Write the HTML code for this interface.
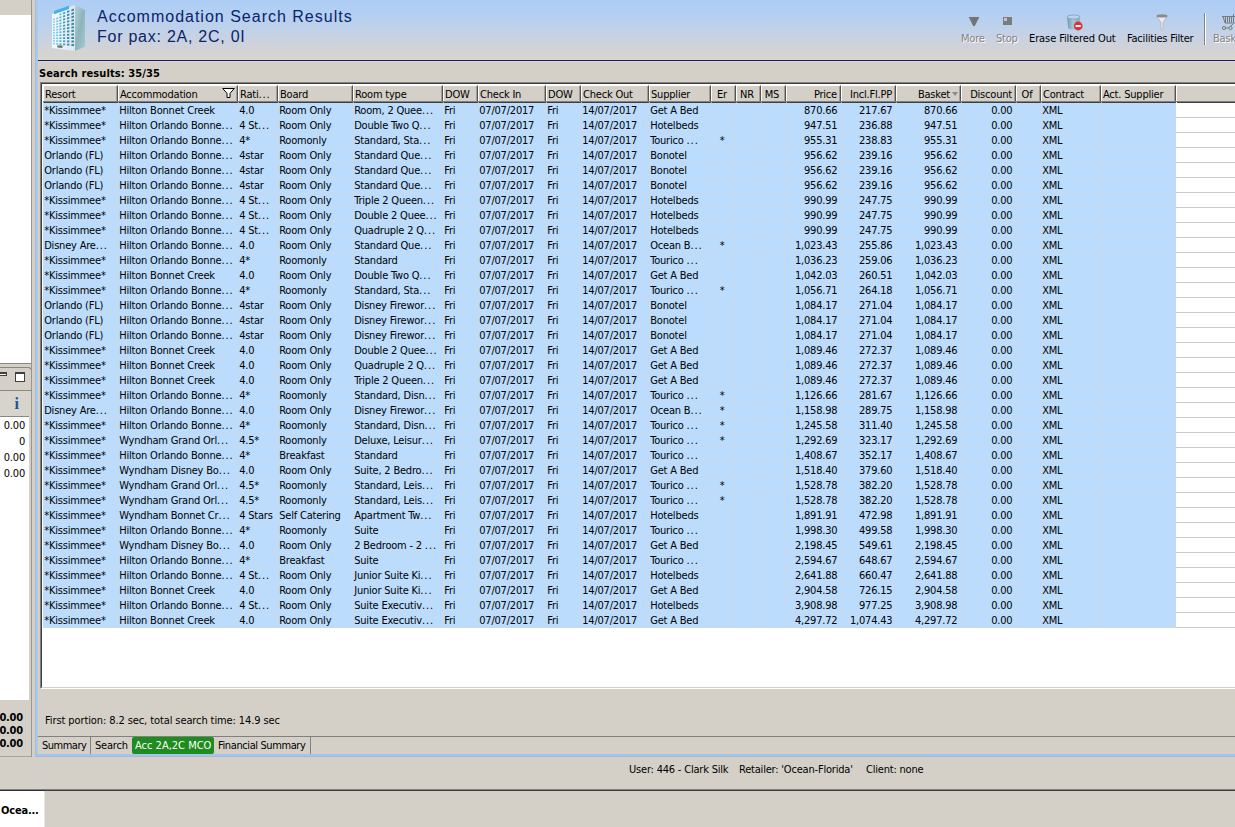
<!DOCTYPE html><html><head><meta charset="utf-8"><title>Accommodation Search Results</title><style>html,body{margin:0;padding:0}
body{width:1235px;height:827px;overflow:hidden;background:#d4d0c8;position:relative;font-family:"DejaVu Sans Condensed","Liberation Sans",sans-serif;font-size:11px;letter-spacing:-0.2px;color:#000;line-height:15px}
div,span{box-sizing:border-box}
.abs{position:absolute}
/* left panel */
#lp-top{left:0;top:0;width:31px;height:15px;background:#d4d0c8}
#lp-w1{left:0;top:15px;width:31px;height:349px;background:#fff;border-bottom:1px solid #8c8880}
#lp-mid{left:0;top:367px;width:32px;height:50px;background:#d4d0c8;border-top:1px solid #8c8880;border-right:1px solid #8c8880;border-top-right-radius:4px}
#lp-w2{left:0;top:416px;width:29px;height:284px;background:#fff;border-top:1px solid #8c8880}
#lp-bot{left:0;top:700px;width:31px;height:56px;background:#d4d0c8}
.lnum{position:absolute;right:1210px;width:40px;text-align:right;white-space:nowrap}
.lnumb{position:absolute;right:1212px;width:40px;text-align:right;white-space:nowrap;font-weight:bold}
#gut{left:31px;top:0;width:4px;height:757px;background:#d4d0c8;border-left:1px solid #9a968e}
#bluev{left:35px;top:0;width:3px;height:757px;background:linear-gradient(to right,#aebccc 1px,#a6caf0 1px)}
#blueh{left:35px;top:754px;width:1200px;height:3px;background:linear-gradient(to bottom,#a0c6f0 2px,#a9b9cc 2px)}
/* header */
#hdr{left:38px;top:0;width:1197px;height:60px;background:linear-gradient(to bottom,#aecdf6 0px,#b3cff2 14px,#c2d2e8 32px,#cfd2da 46px,#d6d4ce 56px,#dad8d0 60px)}
#hline{left:38px;top:60px;width:1197px;height:1px;background:#1c1c50}
#hline2{left:38px;top:61px;width:1197px;height:1px;background:#d6d4e6}
#title{left:97px;top:7px;font-family:"Liberation Sans",sans-serif;font-size:16px;line-height:20px;color:#0a246a;white-space:nowrap;letter-spacing:1px}
#title span{letter-spacing:0.75px}
.tb{position:absolute;top:31px;white-space:nowrap;line-height:15px}
.tb.dis{color:#848284;text-shadow:1px 1px 0 #fff}
#tsep{left:1204px;top:13px;width:2px;height:32px;border-left:1px solid #848284;border-right:1px solid #fff}
#sr{left:39px;top:66px;font-weight:bold;white-space:nowrap;line-height:15px;font-size:11px;letter-spacing:0.1px}
/* table */
#tbl{left:40px;top:82px;width:1200px;height:607px;background:#fff;border-left:1px solid #808080;border-top:1px solid #808080;border-bottom:1px solid #fff}
#tbl2{left:41px;top:83px;width:1200px;height:605px;border-left:1px solid #404040;border-top:1px solid #404040;border-bottom:1px solid #d4d0c8}
.thead{position:absolute;left:43px;top:85px;width:1192px;height:18px;background:#d4d0c8;border-top:1px solid #fff;border-bottom:1px solid #404040}
.thead:after{content:"";position:absolute;left:0;right:0;bottom:0;height:1px;background:#808080}
.th{position:absolute;top:-1px;height:18px;line-height:17px;padding:0 4px 0 1px;white-space:nowrap;overflow:hidden;border-left:1px solid #fff;border-right:1px solid #545454;border-top:1px solid #fff;border-bottom:1px solid #404040;background:#d4d0c8}
.th:after{content:"";position:absolute;right:0;top:0;bottom:0;width:1px;background:#a29e96}
.th:before{content:"";position:absolute;left:0;right:0;bottom:0;height:1px;background:#808080}
.th.r{text-align:right;padding-right:3px}.th.c{text-align:center;padding:0 3px 0 0}
.th.bask{padding-right:10px}
.funnel{position:absolute;right:2px;top:2px}
.th b,.td b,#otab b{font-weight:inherit;letter-spacing:0.9px}
#otab b{letter-spacing:-0.2px}
.sortarr{position:absolute;right:2px;top:6px;width:0;height:0;border-left:3.5px solid transparent;border-right:3.5px solid transparent;border-top:4px solid #8a8a8a}
.thfill{position:absolute;top:-1px;right:0;height:18px;border-top:1px solid #fff;border-left:1px solid #fff}
.tbody{position:absolute;left:43px;top:103px;width:1192px;height:525px}
.tr{position:absolute;left:0;width:1193px;height:15px;border-bottom:1px solid #cacaca;background:linear-gradient(to right,#bbdcfc 0,#bbdcfc 1133px,#fff 1133px)}
.tr:after{content:"";position:absolute;left:0;bottom:-1px;width:1133px;height:1px;background:#c6d9ee}
.td{position:absolute;top:0;height:15px;line-height:15px;padding:0 3px 0 1.2px;white-space:nowrap;overflow:hidden}
.td.r{text-align:right;padding-right:3.6px}.td.c{text-align:center;padding:0 3px 0 0}
.vl{position:absolute;top:0;width:1px;height:525px;background:#c6d9ee}
/* bottom */
#fp{left:45px;top:713px;white-space:nowrap;letter-spacing:-0.1px}
#tabline{left:38px;top:736px;width:1197px;height:1px;background:#808080}
.tab{position:absolute;top:737px;height:17px;line-height:18px;white-space:nowrap;padding:0 4px;border-right:1px solid #808080}
.tab.sel{background:#1e8c1e;color:#fff;border-radius:2px;border-right:none}
.st{position:absolute;top:762px;white-space:nowrap}
#botline{left:0;top:789px;width:1235px;height:2px;background:#404040;border-top:1px solid #808080}
#otab{left:0;top:791px;width:45px;height:36px;background:#fff;border-right:1px solid #e8e6e0;font-weight:bold;line-height:40px;padding-left:1px;white-space:nowrap;overflow:hidden;font-size:11px}
</style></head><body>
<div class="abs" id="lp-top"></div>
<div class="abs" id="lp-w1"></div>
<div class="abs" id="lp-mid">
 <div class="abs" style="left:-2px;top:4px;width:9px;height:4px;border:1px solid #404040;border-top-width:2px;background:#fff"></div>
 <div class="abs" style="left:15px;top:4px;width:10px;height:10px;border:1px solid #404040;border-top-width:2px;background:#fff"></div>
 <div class="abs" style="left:0;top:22px;width:31px;height:27px;background:#d7d4cd;border-top:1px solid #8c8880"></div>
 <div class="abs" style="left:14.5px;top:26px;font-family:'Liberation Serif',serif;font-weight:bold;font-size:16px;line-height:20px;color:#1e5596">i</div>
</div>
<div class="abs" id="lp-w2"></div>
<span class="lnum" style="top:418px">0.00</span>
<span class="lnum" style="top:434px">0</span>
<span class="lnum" style="top:450px">0.00</span>
<span class="lnum" style="top:466px">0.00</span>
<div class="abs" id="lp-bot"></div>
<span class="lnumb" style="top:710px">0.00</span>
<span class="lnumb" style="top:723px">0.00</span>
<span class="lnumb" style="top:736px">0.00</span>
<div class="abs" id="gut"></div>
<div class="abs" id="bluev"></div>
<div class="abs" id="hdr"></div>
<div class="abs" id="hline"></div><div class="abs" id="hline2"></div>
<svg class="abs" style="left:48px;top:2px" width="42" height="54" viewBox="0 0 42 54"><defs><linearGradient id="gs" x1="0" x2="1" y1="0" y2="1"><stop offset="0" stop-color="#b4d0d6"/><stop offset="0.5" stop-color="#8db4bc"/><stop offset="1" stop-color="#a4ccd4"/></linearGradient><linearGradient id="gf" x1="0" x2="1"><stop offset="0" stop-color="#f4f8fb"/><stop offset="1" stop-color="#dde8ee"/></linearGradient></defs><polygon points="27.0,3.0 37.0,8.0 37.0,44.5 27.0,49.0" fill="url(#gs)"/><polygon points="4.0,12.0 27.0,3.0 27.0,49.0 4.0,46.0" fill="url(#gf)"/><polygon points="6.0,9.0 21.0,3.8 21.0,7.0 6.0,12.2" fill="#43b2ea"/><polygon points="5.0,16.9 6.9,16.3 6.9,17.8 5.0,18.4" fill="#74d0f6"/><polygon points="5.0,19.6 6.9,19.1 6.9,20.6 5.0,21.1" fill="#74d0f6"/><polygon points="5.0,22.2 6.9,21.8 6.9,23.3 5.0,23.8" fill="#74d0f6"/><polygon points="5.0,24.9 6.9,24.5 6.9,26.0 5.0,26.4" fill="#74d0f6"/><polygon points="5.0,27.5 6.9,27.3 6.9,28.8 5.0,29.0" fill="#74d0f6"/><polygon points="5.0,30.2 6.9,30.0 6.9,31.5 5.0,31.7" fill="#74d0f6"/><polygon points="5.0,32.8 6.9,32.7 6.9,34.2 5.0,34.3" fill="#74d0f6"/><polygon points="5.0,35.5 6.9,35.4 6.9,36.9 5.0,37.0" fill="#74d0f6"/><polygon points="5.0,38.1 6.9,38.2 6.9,39.7 5.0,39.6" fill="#74d0f6"/><polygon points="5.0,40.8 6.9,40.9 6.9,42.4 5.0,42.3" fill="#74d0f6"/><polygon points="8.2,15.9 10.1,15.3 10.1,16.8 8.2,17.5" fill="#66c6f0"/><polygon points="8.2,18.7 10.1,18.1 10.1,19.7 8.2,20.3" fill="#66c6f0"/><polygon points="8.2,21.5 10.1,21.0 10.1,22.6 8.2,23.1" fill="#66c6f0"/><polygon points="8.2,24.3 10.1,23.9 10.1,25.5 8.2,25.8" fill="#66c6f0"/><polygon points="8.2,27.0 10.1,26.7 10.1,28.3 8.2,28.6" fill="#66c6f0"/><polygon points="8.2,29.8 10.1,29.6 10.1,31.2 8.2,31.4" fill="#66c6f0"/><polygon points="8.2,32.6 10.1,32.5 10.1,34.1 8.2,34.2" fill="#66c6f0"/><polygon points="8.2,35.4 10.1,35.4 10.1,36.9 8.2,37.0" fill="#66c6f0"/><polygon points="8.2,38.2 10.1,38.2 10.1,39.8 8.2,39.8" fill="#66c6f0"/><polygon points="8.2,41.0 10.1,41.1 10.1,42.7 8.2,42.6" fill="#66c6f0"/><polygon points="11.4,11.9 13.4,11.2 13.4,12.8 11.4,13.6" fill="#54b4e0"/><polygon points="11.4,14.8 13.4,14.2 13.4,15.8 11.4,16.5" fill="#54b4e0"/><polygon points="11.4,17.8 13.4,17.2 13.4,18.9 11.4,19.4" fill="#54b4e0"/><polygon points="11.4,20.7 13.4,20.2 13.4,21.9 11.4,22.4" fill="#54b4e0"/><polygon points="11.4,23.6 13.4,23.2 13.4,24.9 11.4,25.3" fill="#54b4e0"/><polygon points="11.4,26.5 13.4,26.2 13.4,27.9 11.4,28.2" fill="#54b4e0"/><polygon points="11.4,29.5 13.4,29.2 13.4,30.9 11.4,31.1" fill="#54b4e0"/><polygon points="11.4,32.4 13.4,32.3 13.4,33.9 11.4,34.1" fill="#54b4e0"/><polygon points="11.4,35.3 13.4,35.3 13.4,36.9 11.4,37.0" fill="#54b4e0"/><polygon points="11.4,38.3 13.4,38.3 13.4,40.0 11.4,39.9" fill="#54b4e0"/><polygon points="11.4,41.2 13.4,41.3 13.4,43.0 11.4,42.9" fill="#54b4e0"/><polygon points="15.0,10.6 17.2,9.7 17.2,11.5 15.0,12.3" fill="#46a0c8"/><polygon points="15.0,13.6 17.2,12.9 17.2,14.7 15.0,15.4" fill="#46a0c8"/><polygon points="15.0,16.7 17.2,16.1 17.2,17.9 15.0,18.5" fill="#46a0c8"/><polygon points="15.0,19.8 17.2,19.3 17.2,21.0 15.0,21.6" fill="#46a0c8"/><polygon points="15.0,22.9 17.2,22.4 17.2,24.2 15.0,24.7" fill="#46a0c8"/><polygon points="15.0,26.0 17.2,25.6 17.2,27.4 15.0,27.7" fill="#46a0c8"/><polygon points="15.0,29.1 17.2,28.8 17.2,30.6 15.0,30.8" fill="#46a0c8"/><polygon points="15.0,32.1 17.2,32.0 17.2,33.8 15.0,33.9" fill="#46a0c8"/><polygon points="15.0,35.2 17.2,35.2 17.2,36.9 15.0,37.0" fill="#46a0c8"/><polygon points="15.0,38.3 17.2,38.3 17.2,40.1 15.0,40.1" fill="#46a0c8"/><polygon points="15.0,41.4 17.2,41.5 17.2,43.3 15.0,43.2" fill="#46a0c8"/><polygon points="19.0,9.1 21.4,8.2 21.4,10.0 19.0,10.9" fill="#3c90b4"/><polygon points="19.0,12.3 21.4,11.5 21.4,13.4 19.0,14.2" fill="#3c90b4"/><polygon points="19.0,15.6 21.4,14.9 21.4,16.8 19.0,17.4" fill="#3c90b4"/><polygon points="19.0,18.8 21.4,18.2 21.4,20.1 19.0,20.7" fill="#3c90b4"/><polygon points="19.0,22.1 21.4,21.6 21.4,23.5 19.0,24.0" fill="#3c90b4"/><polygon points="19.0,25.3 21.4,25.0 21.4,26.8 19.0,27.2" fill="#3c90b4"/><polygon points="19.0,28.6 21.4,28.3 21.4,30.2 19.0,30.5" fill="#3c90b4"/><polygon points="19.0,31.9 21.4,31.7 21.4,33.6 19.0,33.7" fill="#3c90b4"/><polygon points="19.0,35.1 21.4,35.1 21.4,36.9 19.0,37.0" fill="#3c90b4"/><polygon points="19.0,38.4 21.4,38.4 21.4,40.3 19.0,40.3" fill="#3c90b4"/><polygon points="19.0,41.6 21.4,41.8 21.4,43.7 19.0,43.5" fill="#3c90b4"/><polygon points="23.4,7.4 26.0,6.4 26.0,8.4 23.4,9.4" fill="#3888a8"/><polygon points="23.4,10.9 26.0,10.0 26.0,12.0 23.4,12.9" fill="#3888a8"/><polygon points="23.4,14.3 26.0,13.6 26.0,15.6 23.4,16.3" fill="#3888a8"/><polygon points="23.4,17.8 26.0,17.1 26.0,19.1 23.4,19.8" fill="#3888a8"/><polygon points="23.4,21.2 26.0,20.7 26.0,22.7 23.4,23.2" fill="#3888a8"/><polygon points="23.4,24.6 26.0,24.2 26.0,26.2 23.4,26.6" fill="#3888a8"/><polygon points="23.4,28.1 26.0,27.8 26.0,29.8 23.4,30.1" fill="#3888a8"/><polygon points="23.4,31.5 26.0,31.4 26.0,33.4 23.4,33.5" fill="#3888a8"/><polygon points="23.4,35.0 26.0,34.9 26.0,36.9 23.4,37.0" fill="#3888a8"/><polygon points="23.4,38.5 26.0,38.5 26.0,40.5 23.4,40.5" fill="#3888a8"/><polygon points="23.4,41.9 26.0,42.1 26.0,44.1 23.4,43.9" fill="#3888a8"/><polygon points="9.4,43.2 14.5,43.6 14.5,46.0 9.4,45.6" fill="#6a7478"/></svg>
<div class="abs" id="title">Accommodation Search Results<br><span>For pax: 2A, 2C, 0I</span></div>
<svg class="abs" style="left:968px;top:17px" width="12" height="10" viewBox="0 0 12 10"><polygon points="0.7,0 11.3,0 6.8,9 5.2,9" fill="#747474"/></svg>
<svg class="abs" style="left:1003px;top:17px" width="9" height="8" viewBox="0 0 9 8"><rect x="0" y="0" width="9" height="8" fill="#7c7c7c"/><rect x="1" y="1" width="3" height="3" fill="#c4c4c4"/></svg>
<svg class="abs" style="left:1066px;top:14px" width="18" height="17" viewBox="0 0 18 17">
 <defs><linearGradient id="gb" x1="0" x2="1"><stop offset="0" stop-color="#6f9ab8"/><stop offset="0.5" stop-color="#a9c8da"/><stop offset="1" stop-color="#7fa6c0"/></linearGradient></defs>
 <path d="M1 3 L2.2 14.5 Q7.5 16.8 12.8 14.5 L14 3 Z" fill="url(#gb)"/>
 <ellipse cx="7.5" cy="3" rx="6.5" ry="2" fill="#b9d4e4" stroke="#7aa2be" stroke-width="0.8"/>
 <circle cx="12.2" cy="12" r="4.4" fill="#e23034"/><rect x="9.6" y="11" width="5.2" height="2" fill="#fff"/>
</svg>
<svg class="abs" style="left:1156px;top:14px" width="12" height="17" viewBox="0 0 12 17"><path d="M0.5 1.8 L5 8.5 V15.8 L7 14.8 V8.5 L11.5 1.8 Z" fill="#ececec" stroke="#b4b4b4" stroke-width="0.8"/><ellipse cx="6" cy="1.9" rx="5.5" ry="1.7" fill="#8c8c8c"/></svg>
<svg class="abs" style="left:1221px;top:13px" width="16" height="18" viewBox="0 0 16 18"><path d="M1 3.5 H14 M2 3.5 L4 10 H14 M4.5 3.5 V9.5 M6.5 3.5 V9.5 M8.5 3.5 V9.5 M10.5 3.5 V9.5 M12.5 1 V9.5" fill="none" stroke="#787878" stroke-width="1"/><circle cx="3" cy="15" r="1.6" fill="none" stroke="#787878"/><circle cx="9.5" cy="15" r="1.6" fill="none" stroke="#787878"/><path d="M4.6 15 H7.9 M9.5 13.4 L12 11" stroke="#787878" fill="none"/></svg>
<span class="tb dis" style="left:961px">More</span>
<span class="tb dis" style="left:996px">Stop</span>
<span class="tb" style="left:1029px;letter-spacing:-0.1px">Erase Filtered Out</span>
<span class="tb" style="left:1127px">Facilities Filter</span>
<div class="abs" id="tsep"></div>
<span class="tb dis" style="left:1213px">Basket</span>
<div class="abs" id="sr">Search results: 35/35</div>
<div class="abs" id="tbl"></div><div class="abs" id="tbl2"></div>

<div class="thead">
<div class="th l" style="left:0px;width:75px"><span>Resort</span></div>
<div class="th l" style="left:75px;width:120px"><span>Accommodation</span><svg class="funnel" width="13" height="10" viewBox="0 0 13 10"><path d="M0.7 0.5 H12.3 L8 5.3 V9.5 H5 V5.3 Z" fill="#fff" stroke="#000" stroke-width="1"/></svg></div>
<div class="th l" style="left:195px;width:40px"><span>Rati<b>...</b></span></div>
<div class="th l" style="left:235px;width:75px"><span>Board</span></div>
<div class="th l" style="left:310px;width:90px"><span>Room type</span></div>
<div class="th l" style="left:400px;width:35px"><span>DOW</span></div>
<div class="th l" style="left:435px;width:68px"><span>Check In</span></div>
<div class="th l" style="left:503px;width:35px"><span>DOW</span></div>
<div class="th l" style="left:538px;width:68px"><span>Check Out</span></div>
<div class="th l" style="left:606px;width:62px"><span>Supplier</span></div>
<div class="th c" style="left:668px;width:25px"><span>Er</span></div>
<div class="th c" style="left:693px;width:25px"><span>NR</span></div>
<div class="th c" style="left:718px;width:25px"><span>MS</span></div>
<div class="th r" style="left:743px;width:55px"><span>Price</span></div>
<div class="th r" style="left:798px;width:55px"><span>Incl.Fl.PP</span></div>
<div class="th r bask" style="left:853px;width:65px"><span>Basket</span><span class="sortarr"></span></div>
<div class="th r" style="left:918px;width:55px"><span>Discount</span></div>
<div class="th c" style="left:973px;width:25px"><span>Of</span></div>
<div class="th l" style="left:998px;width:60px"><span>Contract</span></div>
<div class="th l" style="left:1058px;width:75px"><span>Act. Supplier</span></div>
<div class="thfill" style="left:1133px"></div>
</div>
<div class="tbody">
<div class="tr" style="top:0px"><span class="td l" style="left:0px;width:75px">*Kissimmee*</span><span class="td l" style="left:75px;width:120px">Hilton Bonnet Creek</span><span class="td l" style="left:195px;width:40px">4.0</span><span class="td l" style="left:235px;width:75px">Room Only</span><span class="td l" style="left:310px;width:90px">Room, 2 Quee<b>...</b></span><span class="td l" style="left:400px;width:35px">Fri</span><span class="td l" style="left:435px;width:68px">07/07/2017</span><span class="td l" style="left:503px;width:35px">Fri</span><span class="td l" style="left:538px;width:68px">14/07/2017</span><span class="td l" style="left:606px;width:62px">Get A Bed</span><span class="td r" style="left:743px;width:55px">870.66</span><span class="td r" style="left:798px;width:55px">217.67</span><span class="td r" style="left:853px;width:65px">870.66</span><span class="td r" style="left:918px;width:55px">0.00</span><span class="td l" style="left:998px;width:60px">XML</span></div>
<div class="tr" style="top:15px"><span class="td l" style="left:0px;width:75px">*Kissimmee*</span><span class="td l" style="left:75px;width:120px">Hilton Orlando Bonne<b>...</b></span><span class="td l" style="left:195px;width:40px">4 St<b>...</b></span><span class="td l" style="left:235px;width:75px">Room Only</span><span class="td l" style="left:310px;width:90px">Double Two Q<b>...</b></span><span class="td l" style="left:400px;width:35px">Fri</span><span class="td l" style="left:435px;width:68px">07/07/2017</span><span class="td l" style="left:503px;width:35px">Fri</span><span class="td l" style="left:538px;width:68px">14/07/2017</span><span class="td l" style="left:606px;width:62px">Hotelbeds</span><span class="td r" style="left:743px;width:55px">947.51</span><span class="td r" style="left:798px;width:55px">236.88</span><span class="td r" style="left:853px;width:65px">947.51</span><span class="td r" style="left:918px;width:55px">0.00</span><span class="td l" style="left:998px;width:60px">XML</span></div>
<div class="tr" style="top:30px"><span class="td l" style="left:0px;width:75px">*Kissimmee*</span><span class="td l" style="left:75px;width:120px">Hilton Orlando Bonne<b>...</b></span><span class="td l" style="left:195px;width:40px">4*</span><span class="td l" style="left:235px;width:75px">Roomonly</span><span class="td l" style="left:310px;width:90px">Standard, Sta<b>...</b></span><span class="td l" style="left:400px;width:35px">Fri</span><span class="td l" style="left:435px;width:68px">07/07/2017</span><span class="td l" style="left:503px;width:35px">Fri</span><span class="td l" style="left:538px;width:68px">14/07/2017</span><span class="td l" style="left:606px;width:62px">Tourico <b>...</b></span><span class="td c" style="left:668px;width:25px">*</span><span class="td r" style="left:743px;width:55px">955.31</span><span class="td r" style="left:798px;width:55px">238.83</span><span class="td r" style="left:853px;width:65px">955.31</span><span class="td r" style="left:918px;width:55px">0.00</span><span class="td l" style="left:998px;width:60px">XML</span></div>
<div class="tr" style="top:45px"><span class="td l" style="left:0px;width:75px">Orlando (FL)</span><span class="td l" style="left:75px;width:120px">Hilton Orlando Bonne<b>...</b></span><span class="td l" style="left:195px;width:40px">4star</span><span class="td l" style="left:235px;width:75px">Room Only</span><span class="td l" style="left:310px;width:90px">Standard Que<b>...</b></span><span class="td l" style="left:400px;width:35px">Fri</span><span class="td l" style="left:435px;width:68px">07/07/2017</span><span class="td l" style="left:503px;width:35px">Fri</span><span class="td l" style="left:538px;width:68px">14/07/2017</span><span class="td l" style="left:606px;width:62px">Bonotel</span><span class="td r" style="left:743px;width:55px">956.62</span><span class="td r" style="left:798px;width:55px">239.16</span><span class="td r" style="left:853px;width:65px">956.62</span><span class="td r" style="left:918px;width:55px">0.00</span><span class="td l" style="left:998px;width:60px">XML</span></div>
<div class="tr" style="top:60px"><span class="td l" style="left:0px;width:75px">Orlando (FL)</span><span class="td l" style="left:75px;width:120px">Hilton Orlando Bonne<b>...</b></span><span class="td l" style="left:195px;width:40px">4star</span><span class="td l" style="left:235px;width:75px">Room Only</span><span class="td l" style="left:310px;width:90px">Standard Que<b>...</b></span><span class="td l" style="left:400px;width:35px">Fri</span><span class="td l" style="left:435px;width:68px">07/07/2017</span><span class="td l" style="left:503px;width:35px">Fri</span><span class="td l" style="left:538px;width:68px">14/07/2017</span><span class="td l" style="left:606px;width:62px">Bonotel</span><span class="td r" style="left:743px;width:55px">956.62</span><span class="td r" style="left:798px;width:55px">239.16</span><span class="td r" style="left:853px;width:65px">956.62</span><span class="td r" style="left:918px;width:55px">0.00</span><span class="td l" style="left:998px;width:60px">XML</span></div>
<div class="tr" style="top:75px"><span class="td l" style="left:0px;width:75px">Orlando (FL)</span><span class="td l" style="left:75px;width:120px">Hilton Orlando Bonne<b>...</b></span><span class="td l" style="left:195px;width:40px">4star</span><span class="td l" style="left:235px;width:75px">Room Only</span><span class="td l" style="left:310px;width:90px">Standard Que<b>...</b></span><span class="td l" style="left:400px;width:35px">Fri</span><span class="td l" style="left:435px;width:68px">07/07/2017</span><span class="td l" style="left:503px;width:35px">Fri</span><span class="td l" style="left:538px;width:68px">14/07/2017</span><span class="td l" style="left:606px;width:62px">Bonotel</span><span class="td r" style="left:743px;width:55px">956.62</span><span class="td r" style="left:798px;width:55px">239.16</span><span class="td r" style="left:853px;width:65px">956.62</span><span class="td r" style="left:918px;width:55px">0.00</span><span class="td l" style="left:998px;width:60px">XML</span></div>
<div class="tr" style="top:90px"><span class="td l" style="left:0px;width:75px">*Kissimmee*</span><span class="td l" style="left:75px;width:120px">Hilton Orlando Bonne<b>...</b></span><span class="td l" style="left:195px;width:40px">4 St<b>...</b></span><span class="td l" style="left:235px;width:75px">Room Only</span><span class="td l" style="left:310px;width:90px">Triple 2 Queen<b>...</b></span><span class="td l" style="left:400px;width:35px">Fri</span><span class="td l" style="left:435px;width:68px">07/07/2017</span><span class="td l" style="left:503px;width:35px">Fri</span><span class="td l" style="left:538px;width:68px">14/07/2017</span><span class="td l" style="left:606px;width:62px">Hotelbeds</span><span class="td r" style="left:743px;width:55px">990.99</span><span class="td r" style="left:798px;width:55px">247.75</span><span class="td r" style="left:853px;width:65px">990.99</span><span class="td r" style="left:918px;width:55px">0.00</span><span class="td l" style="left:998px;width:60px">XML</span></div>
<div class="tr" style="top:105px"><span class="td l" style="left:0px;width:75px">*Kissimmee*</span><span class="td l" style="left:75px;width:120px">Hilton Orlando Bonne<b>...</b></span><span class="td l" style="left:195px;width:40px">4 St<b>...</b></span><span class="td l" style="left:235px;width:75px">Room Only</span><span class="td l" style="left:310px;width:90px">Double 2 Quee<b>...</b></span><span class="td l" style="left:400px;width:35px">Fri</span><span class="td l" style="left:435px;width:68px">07/07/2017</span><span class="td l" style="left:503px;width:35px">Fri</span><span class="td l" style="left:538px;width:68px">14/07/2017</span><span class="td l" style="left:606px;width:62px">Hotelbeds</span><span class="td r" style="left:743px;width:55px">990.99</span><span class="td r" style="left:798px;width:55px">247.75</span><span class="td r" style="left:853px;width:65px">990.99</span><span class="td r" style="left:918px;width:55px">0.00</span><span class="td l" style="left:998px;width:60px">XML</span></div>
<div class="tr" style="top:120px"><span class="td l" style="left:0px;width:75px">*Kissimmee*</span><span class="td l" style="left:75px;width:120px">Hilton Orlando Bonne<b>...</b></span><span class="td l" style="left:195px;width:40px">4 St<b>...</b></span><span class="td l" style="left:235px;width:75px">Room Only</span><span class="td l" style="left:310px;width:90px">Quadruple 2 Q<b>...</b></span><span class="td l" style="left:400px;width:35px">Fri</span><span class="td l" style="left:435px;width:68px">07/07/2017</span><span class="td l" style="left:503px;width:35px">Fri</span><span class="td l" style="left:538px;width:68px">14/07/2017</span><span class="td l" style="left:606px;width:62px">Hotelbeds</span><span class="td r" style="left:743px;width:55px">990.99</span><span class="td r" style="left:798px;width:55px">247.75</span><span class="td r" style="left:853px;width:65px">990.99</span><span class="td r" style="left:918px;width:55px">0.00</span><span class="td l" style="left:998px;width:60px">XML</span></div>
<div class="tr" style="top:135px"><span class="td l" style="left:0px;width:75px">Disney Are<b>...</b></span><span class="td l" style="left:75px;width:120px">Hilton Orlando Bonne<b>...</b></span><span class="td l" style="left:195px;width:40px">4.0</span><span class="td l" style="left:235px;width:75px">Room Only</span><span class="td l" style="left:310px;width:90px">Standard Que<b>...</b></span><span class="td l" style="left:400px;width:35px">Fri</span><span class="td l" style="left:435px;width:68px">07/07/2017</span><span class="td l" style="left:503px;width:35px">Fri</span><span class="td l" style="left:538px;width:68px">14/07/2017</span><span class="td l" style="left:606px;width:62px">Ocean B<b>...</b></span><span class="td c" style="left:668px;width:25px">*</span><span class="td r" style="left:743px;width:55px">1,023.43</span><span class="td r" style="left:798px;width:55px">255.86</span><span class="td r" style="left:853px;width:65px">1,023.43</span><span class="td r" style="left:918px;width:55px">0.00</span><span class="td l" style="left:998px;width:60px">XML</span></div>
<div class="tr" style="top:150px"><span class="td l" style="left:0px;width:75px">*Kissimmee*</span><span class="td l" style="left:75px;width:120px">Hilton Orlando Bonne<b>...</b></span><span class="td l" style="left:195px;width:40px">4*</span><span class="td l" style="left:235px;width:75px">Roomonly</span><span class="td l" style="left:310px;width:90px">Standard</span><span class="td l" style="left:400px;width:35px">Fri</span><span class="td l" style="left:435px;width:68px">07/07/2017</span><span class="td l" style="left:503px;width:35px">Fri</span><span class="td l" style="left:538px;width:68px">14/07/2017</span><span class="td l" style="left:606px;width:62px">Tourico <b>...</b></span><span class="td r" style="left:743px;width:55px">1,036.23</span><span class="td r" style="left:798px;width:55px">259.06</span><span class="td r" style="left:853px;width:65px">1,036.23</span><span class="td r" style="left:918px;width:55px">0.00</span><span class="td l" style="left:998px;width:60px">XML</span></div>
<div class="tr" style="top:165px"><span class="td l" style="left:0px;width:75px">*Kissimmee*</span><span class="td l" style="left:75px;width:120px">Hilton Bonnet Creek</span><span class="td l" style="left:195px;width:40px">4.0</span><span class="td l" style="left:235px;width:75px">Room Only</span><span class="td l" style="left:310px;width:90px">Double Two Q<b>...</b></span><span class="td l" style="left:400px;width:35px">Fri</span><span class="td l" style="left:435px;width:68px">07/07/2017</span><span class="td l" style="left:503px;width:35px">Fri</span><span class="td l" style="left:538px;width:68px">14/07/2017</span><span class="td l" style="left:606px;width:62px">Get A Bed</span><span class="td r" style="left:743px;width:55px">1,042.03</span><span class="td r" style="left:798px;width:55px">260.51</span><span class="td r" style="left:853px;width:65px">1,042.03</span><span class="td r" style="left:918px;width:55px">0.00</span><span class="td l" style="left:998px;width:60px">XML</span></div>
<div class="tr" style="top:180px"><span class="td l" style="left:0px;width:75px">*Kissimmee*</span><span class="td l" style="left:75px;width:120px">Hilton Orlando Bonne<b>...</b></span><span class="td l" style="left:195px;width:40px">4*</span><span class="td l" style="left:235px;width:75px">Roomonly</span><span class="td l" style="left:310px;width:90px">Standard, Sta<b>...</b></span><span class="td l" style="left:400px;width:35px">Fri</span><span class="td l" style="left:435px;width:68px">07/07/2017</span><span class="td l" style="left:503px;width:35px">Fri</span><span class="td l" style="left:538px;width:68px">14/07/2017</span><span class="td l" style="left:606px;width:62px">Tourico <b>...</b></span><span class="td c" style="left:668px;width:25px">*</span><span class="td r" style="left:743px;width:55px">1,056.71</span><span class="td r" style="left:798px;width:55px">264.18</span><span class="td r" style="left:853px;width:65px">1,056.71</span><span class="td r" style="left:918px;width:55px">0.00</span><span class="td l" style="left:998px;width:60px">XML</span></div>
<div class="tr" style="top:195px"><span class="td l" style="left:0px;width:75px">Orlando (FL)</span><span class="td l" style="left:75px;width:120px">Hilton Orlando Bonne<b>...</b></span><span class="td l" style="left:195px;width:40px">4star</span><span class="td l" style="left:235px;width:75px">Room Only</span><span class="td l" style="left:310px;width:90px">Disney Firewor<b>...</b></span><span class="td l" style="left:400px;width:35px">Fri</span><span class="td l" style="left:435px;width:68px">07/07/2017</span><span class="td l" style="left:503px;width:35px">Fri</span><span class="td l" style="left:538px;width:68px">14/07/2017</span><span class="td l" style="left:606px;width:62px">Bonotel</span><span class="td r" style="left:743px;width:55px">1,084.17</span><span class="td r" style="left:798px;width:55px">271.04</span><span class="td r" style="left:853px;width:65px">1,084.17</span><span class="td r" style="left:918px;width:55px">0.00</span><span class="td l" style="left:998px;width:60px">XML</span></div>
<div class="tr" style="top:210px"><span class="td l" style="left:0px;width:75px">Orlando (FL)</span><span class="td l" style="left:75px;width:120px">Hilton Orlando Bonne<b>...</b></span><span class="td l" style="left:195px;width:40px">4star</span><span class="td l" style="left:235px;width:75px">Room Only</span><span class="td l" style="left:310px;width:90px">Disney Firewor<b>...</b></span><span class="td l" style="left:400px;width:35px">Fri</span><span class="td l" style="left:435px;width:68px">07/07/2017</span><span class="td l" style="left:503px;width:35px">Fri</span><span class="td l" style="left:538px;width:68px">14/07/2017</span><span class="td l" style="left:606px;width:62px">Bonotel</span><span class="td r" style="left:743px;width:55px">1,084.17</span><span class="td r" style="left:798px;width:55px">271.04</span><span class="td r" style="left:853px;width:65px">1,084.17</span><span class="td r" style="left:918px;width:55px">0.00</span><span class="td l" style="left:998px;width:60px">XML</span></div>
<div class="tr" style="top:225px"><span class="td l" style="left:0px;width:75px">Orlando (FL)</span><span class="td l" style="left:75px;width:120px">Hilton Orlando Bonne<b>...</b></span><span class="td l" style="left:195px;width:40px">4star</span><span class="td l" style="left:235px;width:75px">Room Only</span><span class="td l" style="left:310px;width:90px">Disney Firewor<b>...</b></span><span class="td l" style="left:400px;width:35px">Fri</span><span class="td l" style="left:435px;width:68px">07/07/2017</span><span class="td l" style="left:503px;width:35px">Fri</span><span class="td l" style="left:538px;width:68px">14/07/2017</span><span class="td l" style="left:606px;width:62px">Bonotel</span><span class="td r" style="left:743px;width:55px">1,084.17</span><span class="td r" style="left:798px;width:55px">271.04</span><span class="td r" style="left:853px;width:65px">1,084.17</span><span class="td r" style="left:918px;width:55px">0.00</span><span class="td l" style="left:998px;width:60px">XML</span></div>
<div class="tr" style="top:240px"><span class="td l" style="left:0px;width:75px">*Kissimmee*</span><span class="td l" style="left:75px;width:120px">Hilton Bonnet Creek</span><span class="td l" style="left:195px;width:40px">4.0</span><span class="td l" style="left:235px;width:75px">Room Only</span><span class="td l" style="left:310px;width:90px">Double 2 Quee<b>...</b></span><span class="td l" style="left:400px;width:35px">Fri</span><span class="td l" style="left:435px;width:68px">07/07/2017</span><span class="td l" style="left:503px;width:35px">Fri</span><span class="td l" style="left:538px;width:68px">14/07/2017</span><span class="td l" style="left:606px;width:62px">Get A Bed</span><span class="td r" style="left:743px;width:55px">1,089.46</span><span class="td r" style="left:798px;width:55px">272.37</span><span class="td r" style="left:853px;width:65px">1,089.46</span><span class="td r" style="left:918px;width:55px">0.00</span><span class="td l" style="left:998px;width:60px">XML</span></div>
<div class="tr" style="top:255px"><span class="td l" style="left:0px;width:75px">*Kissimmee*</span><span class="td l" style="left:75px;width:120px">Hilton Bonnet Creek</span><span class="td l" style="left:195px;width:40px">4.0</span><span class="td l" style="left:235px;width:75px">Room Only</span><span class="td l" style="left:310px;width:90px">Quadruple 2 Q<b>...</b></span><span class="td l" style="left:400px;width:35px">Fri</span><span class="td l" style="left:435px;width:68px">07/07/2017</span><span class="td l" style="left:503px;width:35px">Fri</span><span class="td l" style="left:538px;width:68px">14/07/2017</span><span class="td l" style="left:606px;width:62px">Get A Bed</span><span class="td r" style="left:743px;width:55px">1,089.46</span><span class="td r" style="left:798px;width:55px">272.37</span><span class="td r" style="left:853px;width:65px">1,089.46</span><span class="td r" style="left:918px;width:55px">0.00</span><span class="td l" style="left:998px;width:60px">XML</span></div>
<div class="tr" style="top:270px"><span class="td l" style="left:0px;width:75px">*Kissimmee*</span><span class="td l" style="left:75px;width:120px">Hilton Bonnet Creek</span><span class="td l" style="left:195px;width:40px">4.0</span><span class="td l" style="left:235px;width:75px">Room Only</span><span class="td l" style="left:310px;width:90px">Triple 2 Queen<b>...</b></span><span class="td l" style="left:400px;width:35px">Fri</span><span class="td l" style="left:435px;width:68px">07/07/2017</span><span class="td l" style="left:503px;width:35px">Fri</span><span class="td l" style="left:538px;width:68px">14/07/2017</span><span class="td l" style="left:606px;width:62px">Get A Bed</span><span class="td r" style="left:743px;width:55px">1,089.46</span><span class="td r" style="left:798px;width:55px">272.37</span><span class="td r" style="left:853px;width:65px">1,089.46</span><span class="td r" style="left:918px;width:55px">0.00</span><span class="td l" style="left:998px;width:60px">XML</span></div>
<div class="tr" style="top:285px"><span class="td l" style="left:0px;width:75px">*Kissimmee*</span><span class="td l" style="left:75px;width:120px">Hilton Orlando Bonne<b>...</b></span><span class="td l" style="left:195px;width:40px">4*</span><span class="td l" style="left:235px;width:75px">Roomonly</span><span class="td l" style="left:310px;width:90px">Standard, Disn<b>...</b></span><span class="td l" style="left:400px;width:35px">Fri</span><span class="td l" style="left:435px;width:68px">07/07/2017</span><span class="td l" style="left:503px;width:35px">Fri</span><span class="td l" style="left:538px;width:68px">14/07/2017</span><span class="td l" style="left:606px;width:62px">Tourico <b>...</b></span><span class="td c" style="left:668px;width:25px">*</span><span class="td r" style="left:743px;width:55px">1,126.66</span><span class="td r" style="left:798px;width:55px">281.67</span><span class="td r" style="left:853px;width:65px">1,126.66</span><span class="td r" style="left:918px;width:55px">0.00</span><span class="td l" style="left:998px;width:60px">XML</span></div>
<div class="tr" style="top:300px"><span class="td l" style="left:0px;width:75px">Disney Are<b>...</b></span><span class="td l" style="left:75px;width:120px">Hilton Orlando Bonne<b>...</b></span><span class="td l" style="left:195px;width:40px">4.0</span><span class="td l" style="left:235px;width:75px">Room Only</span><span class="td l" style="left:310px;width:90px">Disney Firewor<b>...</b></span><span class="td l" style="left:400px;width:35px">Fri</span><span class="td l" style="left:435px;width:68px">07/07/2017</span><span class="td l" style="left:503px;width:35px">Fri</span><span class="td l" style="left:538px;width:68px">14/07/2017</span><span class="td l" style="left:606px;width:62px">Ocean B<b>...</b></span><span class="td c" style="left:668px;width:25px">*</span><span class="td r" style="left:743px;width:55px">1,158.98</span><span class="td r" style="left:798px;width:55px">289.75</span><span class="td r" style="left:853px;width:65px">1,158.98</span><span class="td r" style="left:918px;width:55px">0.00</span><span class="td l" style="left:998px;width:60px">XML</span></div>
<div class="tr" style="top:315px"><span class="td l" style="left:0px;width:75px">*Kissimmee*</span><span class="td l" style="left:75px;width:120px">Hilton Orlando Bonne<b>...</b></span><span class="td l" style="left:195px;width:40px">4*</span><span class="td l" style="left:235px;width:75px">Roomonly</span><span class="td l" style="left:310px;width:90px">Standard, Disn<b>...</b></span><span class="td l" style="left:400px;width:35px">Fri</span><span class="td l" style="left:435px;width:68px">07/07/2017</span><span class="td l" style="left:503px;width:35px">Fri</span><span class="td l" style="left:538px;width:68px">14/07/2017</span><span class="td l" style="left:606px;width:62px">Tourico <b>...</b></span><span class="td c" style="left:668px;width:25px">*</span><span class="td r" style="left:743px;width:55px">1,245.58</span><span class="td r" style="left:798px;width:55px">311.40</span><span class="td r" style="left:853px;width:65px">1,245.58</span><span class="td r" style="left:918px;width:55px">0.00</span><span class="td l" style="left:998px;width:60px">XML</span></div>
<div class="tr" style="top:330px"><span class="td l" style="left:0px;width:75px">*Kissimmee*</span><span class="td l" style="left:75px;width:120px">Wyndham Grand Orl<b>...</b></span><span class="td l" style="left:195px;width:40px">4.5*</span><span class="td l" style="left:235px;width:75px">Roomonly</span><span class="td l" style="left:310px;width:90px">Deluxe, Leisur<b>...</b></span><span class="td l" style="left:400px;width:35px">Fri</span><span class="td l" style="left:435px;width:68px">07/07/2017</span><span class="td l" style="left:503px;width:35px">Fri</span><span class="td l" style="left:538px;width:68px">14/07/2017</span><span class="td l" style="left:606px;width:62px">Tourico <b>...</b></span><span class="td c" style="left:668px;width:25px">*</span><span class="td r" style="left:743px;width:55px">1,292.69</span><span class="td r" style="left:798px;width:55px">323.17</span><span class="td r" style="left:853px;width:65px">1,292.69</span><span class="td r" style="left:918px;width:55px">0.00</span><span class="td l" style="left:998px;width:60px">XML</span></div>
<div class="tr" style="top:345px"><span class="td l" style="left:0px;width:75px">*Kissimmee*</span><span class="td l" style="left:75px;width:120px">Hilton Orlando Bonne<b>...</b></span><span class="td l" style="left:195px;width:40px">4*</span><span class="td l" style="left:235px;width:75px">Breakfast</span><span class="td l" style="left:310px;width:90px">Standard</span><span class="td l" style="left:400px;width:35px">Fri</span><span class="td l" style="left:435px;width:68px">07/07/2017</span><span class="td l" style="left:503px;width:35px">Fri</span><span class="td l" style="left:538px;width:68px">14/07/2017</span><span class="td l" style="left:606px;width:62px">Tourico <b>...</b></span><span class="td r" style="left:743px;width:55px">1,408.67</span><span class="td r" style="left:798px;width:55px">352.17</span><span class="td r" style="left:853px;width:65px">1,408.67</span><span class="td r" style="left:918px;width:55px">0.00</span><span class="td l" style="left:998px;width:60px">XML</span></div>
<div class="tr" style="top:360px"><span class="td l" style="left:0px;width:75px">*Kissimmee*</span><span class="td l" style="left:75px;width:120px">Wyndham Disney Bo<b>...</b></span><span class="td l" style="left:195px;width:40px">4.0</span><span class="td l" style="left:235px;width:75px">Room Only</span><span class="td l" style="left:310px;width:90px">Suite, 2 Bedro<b>...</b></span><span class="td l" style="left:400px;width:35px">Fri</span><span class="td l" style="left:435px;width:68px">07/07/2017</span><span class="td l" style="left:503px;width:35px">Fri</span><span class="td l" style="left:538px;width:68px">14/07/2017</span><span class="td l" style="left:606px;width:62px">Get A Bed</span><span class="td r" style="left:743px;width:55px">1,518.40</span><span class="td r" style="left:798px;width:55px">379.60</span><span class="td r" style="left:853px;width:65px">1,518.40</span><span class="td r" style="left:918px;width:55px">0.00</span><span class="td l" style="left:998px;width:60px">XML</span></div>
<div class="tr" style="top:375px"><span class="td l" style="left:0px;width:75px">*Kissimmee*</span><span class="td l" style="left:75px;width:120px">Wyndham Grand Orl<b>...</b></span><span class="td l" style="left:195px;width:40px">4.5*</span><span class="td l" style="left:235px;width:75px">Roomonly</span><span class="td l" style="left:310px;width:90px">Standard, Leis<b>...</b></span><span class="td l" style="left:400px;width:35px">Fri</span><span class="td l" style="left:435px;width:68px">07/07/2017</span><span class="td l" style="left:503px;width:35px">Fri</span><span class="td l" style="left:538px;width:68px">14/07/2017</span><span class="td l" style="left:606px;width:62px">Tourico <b>...</b></span><span class="td c" style="left:668px;width:25px">*</span><span class="td r" style="left:743px;width:55px">1,528.78</span><span class="td r" style="left:798px;width:55px">382.20</span><span class="td r" style="left:853px;width:65px">1,528.78</span><span class="td r" style="left:918px;width:55px">0.00</span><span class="td l" style="left:998px;width:60px">XML</span></div>
<div class="tr" style="top:390px"><span class="td l" style="left:0px;width:75px">*Kissimmee*</span><span class="td l" style="left:75px;width:120px">Wyndham Grand Orl<b>...</b></span><span class="td l" style="left:195px;width:40px">4.5*</span><span class="td l" style="left:235px;width:75px">Roomonly</span><span class="td l" style="left:310px;width:90px">Standard, Leis<b>...</b></span><span class="td l" style="left:400px;width:35px">Fri</span><span class="td l" style="left:435px;width:68px">07/07/2017</span><span class="td l" style="left:503px;width:35px">Fri</span><span class="td l" style="left:538px;width:68px">14/07/2017</span><span class="td l" style="left:606px;width:62px">Tourico <b>...</b></span><span class="td c" style="left:668px;width:25px">*</span><span class="td r" style="left:743px;width:55px">1,528.78</span><span class="td r" style="left:798px;width:55px">382.20</span><span class="td r" style="left:853px;width:65px">1,528.78</span><span class="td r" style="left:918px;width:55px">0.00</span><span class="td l" style="left:998px;width:60px">XML</span></div>
<div class="tr" style="top:405px"><span class="td l" style="left:0px;width:75px">*Kissimmee*</span><span class="td l" style="left:75px;width:120px">Wyndham Bonnet Cr<b>...</b></span><span class="td l" style="left:195px;width:40px">4 Stars</span><span class="td l" style="left:235px;width:75px">Self Catering</span><span class="td l" style="left:310px;width:90px">Apartment Tw<b>...</b></span><span class="td l" style="left:400px;width:35px">Fri</span><span class="td l" style="left:435px;width:68px">07/07/2017</span><span class="td l" style="left:503px;width:35px">Fri</span><span class="td l" style="left:538px;width:68px">14/07/2017</span><span class="td l" style="left:606px;width:62px">Hotelbeds</span><span class="td r" style="left:743px;width:55px">1,891.91</span><span class="td r" style="left:798px;width:55px">472.98</span><span class="td r" style="left:853px;width:65px">1,891.91</span><span class="td r" style="left:918px;width:55px">0.00</span><span class="td l" style="left:998px;width:60px">XML</span></div>
<div class="tr" style="top:420px"><span class="td l" style="left:0px;width:75px">*Kissimmee*</span><span class="td l" style="left:75px;width:120px">Hilton Orlando Bonne<b>...</b></span><span class="td l" style="left:195px;width:40px">4*</span><span class="td l" style="left:235px;width:75px">Roomonly</span><span class="td l" style="left:310px;width:90px">Suite</span><span class="td l" style="left:400px;width:35px">Fri</span><span class="td l" style="left:435px;width:68px">07/07/2017</span><span class="td l" style="left:503px;width:35px">Fri</span><span class="td l" style="left:538px;width:68px">14/07/2017</span><span class="td l" style="left:606px;width:62px">Tourico <b>...</b></span><span class="td r" style="left:743px;width:55px">1,998.30</span><span class="td r" style="left:798px;width:55px">499.58</span><span class="td r" style="left:853px;width:65px">1,998.30</span><span class="td r" style="left:918px;width:55px">0.00</span><span class="td l" style="left:998px;width:60px">XML</span></div>
<div class="tr" style="top:435px"><span class="td l" style="left:0px;width:75px">*Kissimmee*</span><span class="td l" style="left:75px;width:120px">Wyndham Disney Bo<b>...</b></span><span class="td l" style="left:195px;width:40px">4.0</span><span class="td l" style="left:235px;width:75px">Room Only</span><span class="td l" style="left:310px;width:90px">2 Bedroom - 2 <b>...</b></span><span class="td l" style="left:400px;width:35px">Fri</span><span class="td l" style="left:435px;width:68px">07/07/2017</span><span class="td l" style="left:503px;width:35px">Fri</span><span class="td l" style="left:538px;width:68px">14/07/2017</span><span class="td l" style="left:606px;width:62px">Get A Bed</span><span class="td r" style="left:743px;width:55px">2,198.45</span><span class="td r" style="left:798px;width:55px">549.61</span><span class="td r" style="left:853px;width:65px">2,198.45</span><span class="td r" style="left:918px;width:55px">0.00</span><span class="td l" style="left:998px;width:60px">XML</span></div>
<div class="tr" style="top:450px"><span class="td l" style="left:0px;width:75px">*Kissimmee*</span><span class="td l" style="left:75px;width:120px">Hilton Orlando Bonne<b>...</b></span><span class="td l" style="left:195px;width:40px">4*</span><span class="td l" style="left:235px;width:75px">Breakfast</span><span class="td l" style="left:310px;width:90px">Suite</span><span class="td l" style="left:400px;width:35px">Fri</span><span class="td l" style="left:435px;width:68px">07/07/2017</span><span class="td l" style="left:503px;width:35px">Fri</span><span class="td l" style="left:538px;width:68px">14/07/2017</span><span class="td l" style="left:606px;width:62px">Tourico <b>...</b></span><span class="td r" style="left:743px;width:55px">2,594.67</span><span class="td r" style="left:798px;width:55px">648.67</span><span class="td r" style="left:853px;width:65px">2,594.67</span><span class="td r" style="left:918px;width:55px">0.00</span><span class="td l" style="left:998px;width:60px">XML</span></div>
<div class="tr" style="top:465px"><span class="td l" style="left:0px;width:75px">*Kissimmee*</span><span class="td l" style="left:75px;width:120px">Hilton Orlando Bonne<b>...</b></span><span class="td l" style="left:195px;width:40px">4 St<b>...</b></span><span class="td l" style="left:235px;width:75px">Room Only</span><span class="td l" style="left:310px;width:90px">Junior Suite Ki<b>...</b></span><span class="td l" style="left:400px;width:35px">Fri</span><span class="td l" style="left:435px;width:68px">07/07/2017</span><span class="td l" style="left:503px;width:35px">Fri</span><span class="td l" style="left:538px;width:68px">14/07/2017</span><span class="td l" style="left:606px;width:62px">Hotelbeds</span><span class="td r" style="left:743px;width:55px">2,641.88</span><span class="td r" style="left:798px;width:55px">660.47</span><span class="td r" style="left:853px;width:65px">2,641.88</span><span class="td r" style="left:918px;width:55px">0.00</span><span class="td l" style="left:998px;width:60px">XML</span></div>
<div class="tr" style="top:480px"><span class="td l" style="left:0px;width:75px">*Kissimmee*</span><span class="td l" style="left:75px;width:120px">Hilton Bonnet Creek</span><span class="td l" style="left:195px;width:40px">4.0</span><span class="td l" style="left:235px;width:75px">Room Only</span><span class="td l" style="left:310px;width:90px">Junior Suite Ki<b>...</b></span><span class="td l" style="left:400px;width:35px">Fri</span><span class="td l" style="left:435px;width:68px">07/07/2017</span><span class="td l" style="left:503px;width:35px">Fri</span><span class="td l" style="left:538px;width:68px">14/07/2017</span><span class="td l" style="left:606px;width:62px">Get A Bed</span><span class="td r" style="left:743px;width:55px">2,904.58</span><span class="td r" style="left:798px;width:55px">726.15</span><span class="td r" style="left:853px;width:65px">2,904.58</span><span class="td r" style="left:918px;width:55px">0.00</span><span class="td l" style="left:998px;width:60px">XML</span></div>
<div class="tr" style="top:495px"><span class="td l" style="left:0px;width:75px">*Kissimmee*</span><span class="td l" style="left:75px;width:120px">Hilton Orlando Bonne<b>...</b></span><span class="td l" style="left:195px;width:40px">4 St<b>...</b></span><span class="td l" style="left:235px;width:75px">Room Only</span><span class="td l" style="left:310px;width:90px">Suite Executiv<b>...</b></span><span class="td l" style="left:400px;width:35px">Fri</span><span class="td l" style="left:435px;width:68px">07/07/2017</span><span class="td l" style="left:503px;width:35px">Fri</span><span class="td l" style="left:538px;width:68px">14/07/2017</span><span class="td l" style="left:606px;width:62px">Hotelbeds</span><span class="td r" style="left:743px;width:55px">3,908.98</span><span class="td r" style="left:798px;width:55px">977.25</span><span class="td r" style="left:853px;width:65px">3,908.98</span><span class="td r" style="left:918px;width:55px">0.00</span><span class="td l" style="left:998px;width:60px">XML</span></div>
<div class="tr" style="top:510px"><span class="td l" style="left:0px;width:75px">*Kissimmee*</span><span class="td l" style="left:75px;width:120px">Hilton Bonnet Creek</span><span class="td l" style="left:195px;width:40px">4.0</span><span class="td l" style="left:235px;width:75px">Room Only</span><span class="td l" style="left:310px;width:90px">Suite Executiv<b>...</b></span><span class="td l" style="left:400px;width:35px">Fri</span><span class="td l" style="left:435px;width:68px">07/07/2017</span><span class="td l" style="left:503px;width:35px">Fri</span><span class="td l" style="left:538px;width:68px">14/07/2017</span><span class="td l" style="left:606px;width:62px">Get A Bed</span><span class="td r" style="left:743px;width:55px">4,297.72</span><span class="td r" style="left:798px;width:55px">1,074.43</span><span class="td r" style="left:853px;width:65px">4,297.72</span><span class="td r" style="left:918px;width:55px">0.00</span><span class="td l" style="left:998px;width:60px">XML</span></div>
<i class="vl" style="left:74px"></i><i class="vl" style="left:194px"></i><i class="vl" style="left:234px"></i><i class="vl" style="left:309px"></i><i class="vl" style="left:399px"></i><i class="vl" style="left:434px"></i><i class="vl" style="left:502px"></i><i class="vl" style="left:537px"></i><i class="vl" style="left:605px"></i><i class="vl" style="left:667px"></i><i class="vl" style="left:692px"></i><i class="vl" style="left:717px"></i><i class="vl" style="left:742px"></i><i class="vl" style="left:797px"></i><i class="vl" style="left:852px"></i><i class="vl" style="left:917px"></i><i class="vl" style="left:972px"></i><i class="vl" style="left:997px"></i><i class="vl" style="left:1057px"></i><i class="vl" style="left:1132px"></i>
</div>
<div class="abs" id="fp">First portion: 8.2 sec, total search time: 14.9 sec</div>
<div class="abs" id="tabline"></div>
<span class="tab" style="left:38px;width:53px;letter-spacing:-0.5px">Summary</span>
<span class="tab" style="left:91px;width:40px;border-right:none">Search</span>
<span class="tab sel" style="left:132px;width:82px;letter-spacing:0;padding:0 3px">Acc 2A,2C MCO</span>
<span class="tab" style="left:214px;width:97px;letter-spacing:-0.4px">Financial Summary</span>
<div class="abs" id="blueh"></div>
<span class="st" style="left:629px">User: 446 - Clark Silk</span><span class="st" style="left:739px">Retailer: 'Ocean-Florida'</span><span class="st" style="left:866px">Client: none</span>
<div class="abs" id="botline"></div>
<div class="abs" style="left:0;top:756px;width:31px;height:1px;background:#a8a49c"></div>
<div class="abs" style="left:0;top:790px;width:45px;height:2px;background:#303030"></div>
<div class="abs" id="otab">Ocea<b>...</b></div>

</body></html>
